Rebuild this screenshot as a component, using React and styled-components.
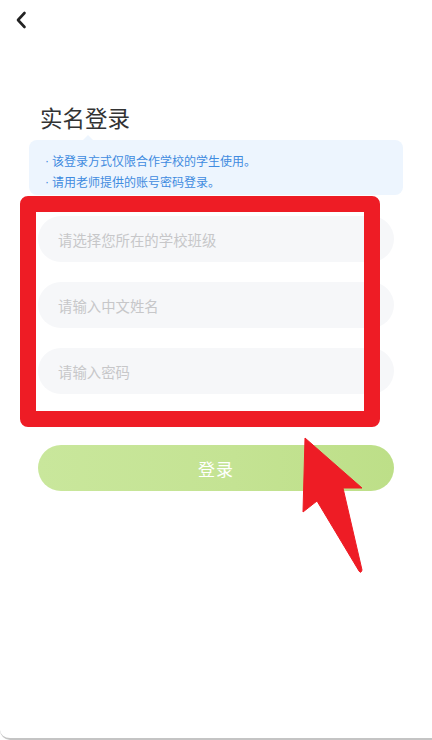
import React from 'react';
import styled, { createGlobalStyle } from 'styled-components';

const GlobalStyle = createGlobalStyle`
    * {
        box-sizing: border-box;
    }
    body {
        margin: 0;
        background: #ffffff;
        font-family: "Noto Sans CJK SC", "Noto Sans", sans-serif;
    }
`;

const Page = styled.div`
    position: relative;
    height: 740px;
    background: #fff;
    border-bottom: 2px solid #c4c4c4;
    border-bottom-left-radius: 10px;
    overflow: hidden;
`;

const TopBar = styled.div`
    height: 40px;
    display: flex;
    align-items: center;
    padding-left: 13px;
`;

const BackButton = styled.button`
    border: 0;
    background: none;
    padding: 0;
    width: 16px;
    height: 20px;
    display: flex;
    align-items: center;
    justify-content: center;
    cursor: pointer;
`;

const Content = styled.div`
    padding: 62px 38px 0;
`;

const Title = styled.h1`
    margin: 0 0 8px 2px;
    font-size: 22.5px;
    line-height: 30px;
    font-weight: 400;
    color: #333;
`;

const Notice = styled.div`
    position: relative;
    margin: 0 -9px;
    padding: 10px 14px 3px;
    background: #edf5fe;
    border-radius: 8px;

    &::before {
        content: '';
        position: absolute;
        top: -5px;
        left: 54px;
        border-left: 5px solid transparent;
        border-right: 5px solid transparent;
        border-bottom: 5px solid #edf5fe;
    }
`;

const NoticeLine = styled.p`
    margin: 0;
    height: 21px;
    display: flex;
    align-items: center;
    font-size: 12px;
    color: #3f8be0;
`;

const Dot = styled.span`
    font-family: "Liberation Sans", sans-serif;
    margin: 0 3px 0 2px;
`;

const Form = styled.div`
    margin-top: 21px;
    display: flex;
    flex-direction: column;
    gap: 20px;
`;

const Field = styled.input`
    height: 46px;
    border: 0;
    outline: none;
    border-radius: 23px;
    background: #f6f7f9;
    padding: 0 20px;
    font-family: inherit;
    font-size: 14.4px;
    color: #333;

    &::placeholder {
        color: #c7c7c9;
    }
`;

const SubmitButton = styled.button`
    margin-top: 51px;
    width: 100%;
    height: 46px;
    border: 0;
    border-radius: 23px;
    background: linear-gradient(90deg, #c9e79c 0%, #c4e393 55%, #bddf88 100%);
    color: #fff;
    font-family: inherit;
    font-size: 17px;
    letter-spacing: 1px;
    cursor: pointer;
`;

const Highlight = styled.div`
    position: absolute;
    left: 20px;
    top: 196px;
    width: 360px;
    height: 231px;
    border: 16px solid #ee1c25;
    border-radius: 8px;
    pointer-events: none;
`;

const Pointer = styled.svg`
    position: absolute;
    left: 0;
    top: 0;
    pointer-events: none;
`;

const notices = ['该登录方式仅限合作学校的学生使用。', '请用老师提供的账号密码登录。'];

const App = () => {
    return (
        <>
            <GlobalStyle />
            <Page>
                <TopBar>
                    <BackButton aria-label="返回">
                        <svg width="12" height="18" viewBox="0 0 12 18">
                            <path d="M9.5 2 L3 9 L9.5 16" fill="none" stroke="#222" strokeWidth="2.6" strokeLinecap="round" strokeLinejoin="round" />
                        </svg>
                    </BackButton>
                </TopBar>
                <Content>
                    <Title>实名登录</Title>
                    <Notice>
                        {notices.map((line) => (
                            <NoticeLine key={line}>
                                <Dot>·</Dot>
                                <span>{line}</span>
                            </NoticeLine>
                        ))}
                    </Notice>
                    <Form>
                        <Field placeholder="请选择您所在的学校班级" readOnly />
                        <Field placeholder="请输入中文姓名" />
                        <Field placeholder="请输入密码" type="password" />
                    </Form>
                    <SubmitButton>登录</SubmitButton>
                </Content>
                <Highlight />
                <Pointer width="432" height="740" viewBox="0 0 432 740">
                    <path
                        d="M305 438 L362 488 L343 488 L362 570 Q361 574 359 571 L317 501 L303 512 Z"
                        fill="#ee1c25"
                        stroke="#ee1c25"
                        strokeWidth="1"
                        strokeLinejoin="round"
                    />
                </Pointer>
            </Page>
        </>
    );
};

export default App;
